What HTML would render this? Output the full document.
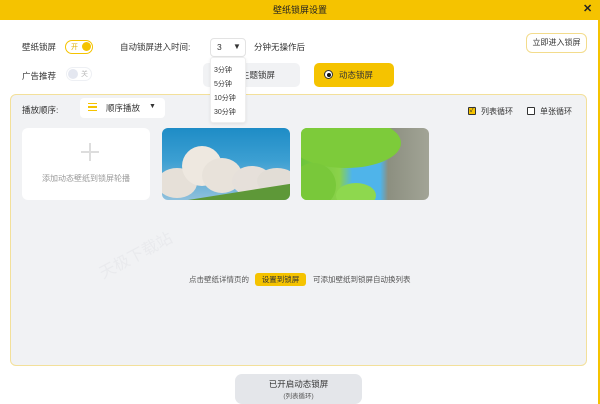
<!DOCTYPE html><html><head><meta charset="utf-8"><style>
*{margin:0;padding:0;box-sizing:border-box}
body{width:600px;height:404px;overflow:hidden;background:#fff;font-family:"Liberation Sans","Noto Sans CJK SC",sans-serif;color:#333;position:relative;font-size:8px}
.a{position:absolute;white-space:nowrap}
.hdr{left:0;top:0;width:600px;height:20px;background:#f5c300}
</style></head><body>
<div class="a hdr"></div>
<div class="a" style="left:0;top:3px;width:600px;text-align:center;font-size:9px;color:#222">壁纸锁屏设置</div>
<div class="a" style="left:583px;top:2px;font-size:11px;font-weight:bold;color:#222">✕</div>
<div class="a" style="left:598px;top:20px;width:2px;height:384px;background:#f5c300"></div>

<div class="a" style="left:22px;top:41px;font-size:8.5px">壁纸锁屏</div>
<div class="a" style="left:65px;top:40px;width:28px;height:14px;border:1.5px solid #f5c300;border-radius:7px;background:#fff"><span class="a" style="left:5px;top:1px;font-size:7px;color:#e0b000">开</span><span class="a" style="right:1px;top:1px;width:9px;height:9px;border-radius:50%;background:#f5c300"></span></div>
<div class="a" style="left:120px;top:41px;font-size:8.5px">自动锁屏进入时间:</div>
<div class="a" style="left:210px;top:38px;width:36px;height:19px;border:1px solid #e3e3e3;border-radius:4px;background:#fff"><span class="a" style="left:6px;top:3px;font-size:8.5px">3</span><span class="a" style="left:22px;top:3px;font-size:8px">▼</span></div>
<div class="a" style="left:254px;top:41px;font-size:8.5px">分钟无操作后</div>
<div class="a" style="left:526px;top:33px;width:61px;height:20px;border:1px solid #f3dc8c;border-radius:6px;background:#fff;text-align:center;line-height:18px;font-size:8px">立即进入锁屏</div>

<div class="a" style="left:22px;top:70px;font-size:8.5px">广告推荐</div>
<div class="a" style="left:66px;top:67px;width:26px;height:14px;border:1px solid #eef0f4;border-radius:7px;background:#fff"><span class="a" style="left:1px;top:1px;width:10px;height:10px;border-radius:50%;background:#e4e7f0"></span><span class="a" style="left:14px;top:1px;font-size:7px;color:#bbb">关</span></div>
<div class="a" style="left:203px;top:63px;width:97px;height:24px;background:#f1f2f4;border-radius:5px"><span class="a" style="left:38px;top:6px;font-size:8.5px">主题锁屏</span></div>
<div class="a" style="left:314px;top:63px;width:80px;height:24px;background:#f5c300;border-radius:5px"><span class="a" style="left:10px;top:7px;width:9px;height:9px;border:1px solid #333;border-radius:50%;background:#fff"><span class="a" style="left:1.5px;top:1.5px;width:4px;height:4px;border-radius:50%;background:#111"></span></span><span class="a" style="left:25px;top:6px;font-size:8.5px">动态锁屏</span></div>

<div class="a" style="left:10px;top:94px;width:577px;height:272px;background:#f1f2f4;border:1px solid #f3e09a;border-radius:6px"></div>
<div class="a" style="left:22px;top:104px;font-size:8.5px">播放顺序:</div>
<div class="a" style="left:80px;top:98px;width:85px;height:20px;background:#fff;border-radius:4px"><span class="a" style="left:8px;top:5px;width:9px;height:8px;border-top:1.5px solid #f5c300;border-bottom:1.5px solid #f5c300"><span class="a" style="left:0;top:2px;width:9px;height:1.5px;background:#f5c300"></span></span><span class="a" style="left:26px;top:4px;font-size:8.5px">顺序播放</span><span class="a" style="left:69px;top:5px;font-size:7px">▼</span></div>
<div class="a" style="left:468px;top:107px;width:8px;height:8px;border:1px solid #333;border-radius:1px;background:#f5c300;font-size:7px;line-height:6px;text-align:center">✓</div>
<div class="a" style="left:481px;top:106px;font-size:8px">列表循环</div>
<div class="a" style="left:527px;top:107px;width:8px;height:8px;border:1px solid #333;border-radius:1px;background:#fff"></div>
<div class="a" style="left:540px;top:106px;font-size:8px">单张循环</div>

<div class="a" style="left:22px;top:128px;width:128px;height:72px;background:#fff;border-radius:6px"><div class="a" style="left:59px;top:23px;width:18px;height:2px;background:#ddd"></div><div class="a" style="left:67px;top:15px;width:2px;height:18px;background:#ddd"></div><div class="a" style="left:0;top:45px;width:128px;text-align:center;font-size:8px;color:#999">添加动态壁纸到锁屏轮播</div></div>
<div class="a" style="left:162px;top:128px;width:128px;height:72px;border-radius:6px;overflow:hidden;background:linear-gradient(#1e8cc6,#3c9fd2 45%,#8fc0dc)">
<div class="a" style="left:-5px;top:40px;width:40px;height:30px;border-radius:50%;background:#e6e0d8"></div>
<div class="a" style="left:20px;top:18px;width:40px;height:40px;border-radius:50%;background:#eee8e0"></div>
<div class="a" style="left:40px;top:30px;width:40px;height:35px;border-radius:50%;background:#e8e2da"></div>
<div class="a" style="left:70px;top:38px;width:40px;height:30px;border-radius:50%;background:#e6e0da"></div>
<div class="a" style="left:95px;top:40px;width:40px;height:26px;border-radius:50%;background:#e2ddd6"></div>
<div class="a" style="left:-10px;top:66px;width:150px;height:30px;background:#5e9838;transform:rotate(-9deg)"></div></div>
<div class="a" style="left:301px;top:128px;width:128px;height:72px;border-radius:6px;overflow:hidden;background:linear-gradient(90deg,#6cc43a,#8bd24a 30%,#4fb4ea 40%,#4fb4ea 62%,#8c8f80 68%,#a2a496)">
<div class="a" style="left:-10px;top:-10px;width:110px;height:50px;border-radius:50%;background:#7dcb3a"></div>
<div class="a" style="left:-10px;top:35px;width:45px;height:45px;border-radius:50%;background:#79c83a"></div>
<div class="a" style="left:35px;top:55px;width:40px;height:25px;border-radius:50%;background:#8ed84e"></div></div>

<div class="a" style="left:95px;top:242px;font-size:16px;color:#e9eaed;transform:rotate(-28deg)">天极下载站</div>

<div class="a" style="left:189px;top:274px;font-size:7.5px;color:#555">点击壁纸详情页的</div>
<div class="a" style="left:255px;top:273px;width:51px;height:13px;background:#f5c300;border-radius:3px;text-align:center;line-height:13px;font-size:7.5px">设置到锁屏</div>
<div class="a" style="left:313px;top:274px;font-size:7.5px;color:#555">可添加壁纸到锁屏自动换列表</div>

<div class="a" style="left:235px;top:374px;width:127px;height:30px;background:#e4e6ea;border-radius:7px;text-align:center"><div style="font-size:8.5px;margin-top:4px">已开启动态锁屏</div><div style="font-size:6.5px;color:#555">(列表循环)</div></div>

<div class="a" style="left:210px;top:57px;width:36px;height:66px;background:#fff;border:1px solid #eee;border-radius:3px;box-shadow:0 1px 3px rgba(0,0,0,.08)"><div class="a" style="left:3px;top:6px;font-size:7px;line-height:14px">3分钟<br>5分钟<br>10分钟<br>30分钟</div></div>
</body></html>
